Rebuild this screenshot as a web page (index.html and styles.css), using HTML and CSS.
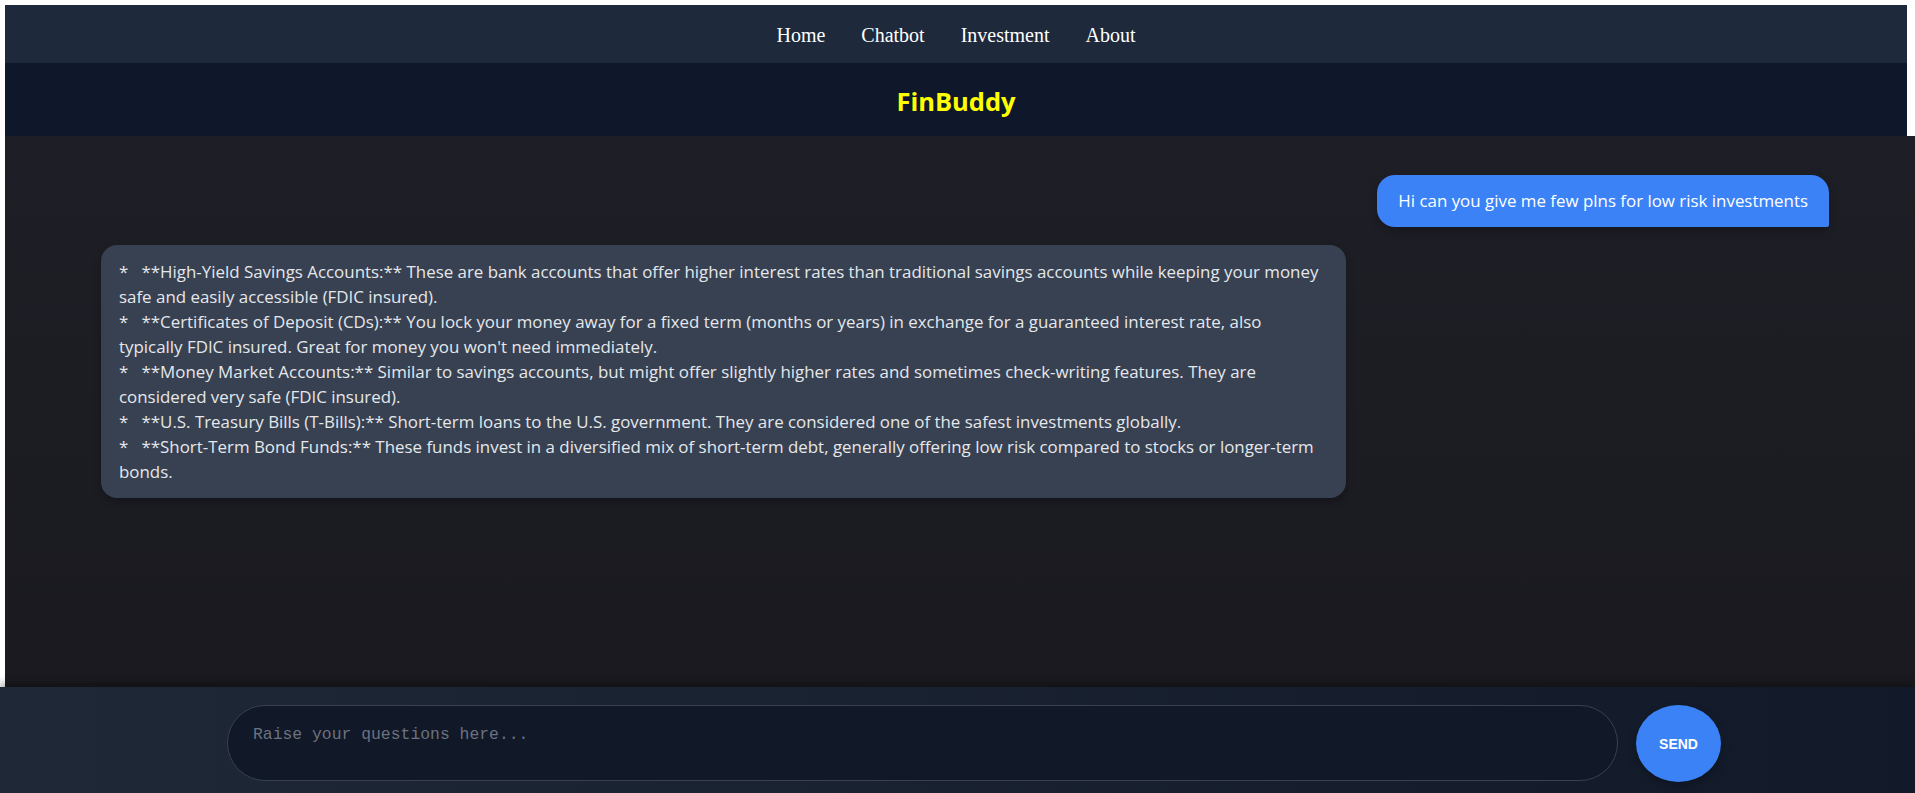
FILE: index.html
```html
<!DOCTYPE html>
<html lang="en">
<head>
<meta charset="utf-8">
<title>FinBuddy</title>
<link rel="stylesheet" href="styles.css">
</head>
<body>
<div class="app">
  <div class="top">
    <nav class="nav">
      <a class="nav-link" href="#">Home</a>
      <a class="nav-link" href="#">Chatbot</a>
      <a class="nav-link" href="#">Investment</a>
      <a class="nav-link" href="#">About</a>
    </nav>
    <header class="header">
      <h1 class="brand">FinBuddy</h1>
    </header>
  </div>
  <main class="chat">
    <div class="row row-user">
      <div class="bubble bubble-user">Hi can you give me few plns for low risk investments</div>
    </div>
    <div class="row row-bot">
      <div class="bubble bubble-bot">*   **High-Yield Savings Accounts:** These are bank accounts that offer higher interest rates than traditional savings accounts while keeping your money safe and easily accessible (FDIC insured).
*   **Certificates of Deposit (CDs):** You lock your money away for a fixed term (months or years) in exchange for a guaranteed interest rate, also typically FDIC insured. Great for money you won't need immediately.
*   **Money Market Accounts:** Similar to savings accounts, but might offer slightly higher rates and sometimes check-writing features. They are considered very safe (FDIC insured).
*   **U.S. Treasury Bills (T-Bills):** Short-term loans to the U.S. government. They are considered one of the safest investments globally.
*   **Short-Term Bond Funds:** These funds invest in a diversified mix of short-term debt, generally offering low risk compared to stocks or longer-term bonds.</div>
    </div>
  </main>
  <footer class="composer">
    <textarea class="input" placeholder="Raise your questions here..."></textarea>
    <button class="send" type="button">SEND</button>
  </footer>
</div>
</body>
</html>
```
FILE: styles.css
```css
* { box-sizing: border-box; }
html, body { margin: 0; padding: 0; }
body {
  background: #ffffff;
  height: 100vh;
  overflow: hidden;
}
.app {
  display: flex;
  flex-direction: column;
  height: 100vh;
  padding-top: 5px;
}
.top {
  margin: 0 8px 0 5px;
}
.nav {
  height: 58px;
  background: #1e293b;
  display: flex;
  justify-content: center;
  align-items: center;
  gap: 36px;
}
.nav-link {
  font-family: "Liberation Serif", "Times New Roman", serif;
  font-size: 20px;
  color: #ffffff;
  text-decoration: none;
  padding-top: 3px;
}
.header {
  height: 73px;
  background: #0f172a;
  display: flex;
  align-items: center;
  justify-content: center;
}
.brand {
  margin: 0;
  font-family: "Open Sans", "Noto Sans", sans-serif;
  font-weight: 700;
  font-size: 25.5px;
  color: #ffff00;
  padding-top: 3px;
}
.chat {
  flex: 1;
  margin-left: 5px;
  background: linear-gradient(#1e1e26, #1a1a20);
  padding: 39px 86px 0 96px;
  display: flex;
  flex-direction: column;
  gap: 18px;
  font-family: "Open Sans", "Noto Sans", sans-serif;
}
.row { display: flex; }
.row-user { justify-content: flex-end; }
.row-bot { justify-content: flex-start; }
.bubble {
  font-size: 16.9px;
  line-height: 25px;
  white-space: pre-wrap;
  box-shadow: 0 4px 8px rgba(0, 0, 0, 0.25);
}
.bubble-user {
  background: #3b82f6;
  color: #ffffff;
  padding: 13px 21px 14px 21px;
  border-radius: 18px 18px 2px 18px;
}
.bubble-bot {
  background: #374151;
  color: #e5e7eb;
  width: 1245px;
  padding: 14px 18px;
  border-radius: 16px;
}
.composer {
  height: 106px;
  flex-shrink: 0;
  background: linear-gradient(to right, #1f2837, #121a2a);
  box-shadow: 0 -4px 8px rgba(0, 0, 0, 0.35);
  display: flex;
  align-items: flex-start;
  padding: 18px 0 0 227px;
  gap: 18px;
  position: relative;
}
.input {
  width: 1391px;
  height: 76px;
  resize: none;
  background: #111827;
  border: 1px solid #374151;
  border-radius: 38px;
  padding: 19px 25px;
  font-family: "Liberation Mono", "DejaVu Sans Mono", monospace;
  font-size: 16.4px;
  color: #e5e7eb;
  outline: none;
}
.input::placeholder { color: #6b7280; }
.send {
  width: 85px;
  height: 77px;
  border: none;
  border-radius: 50%;
  background: #3b82f6;
  color: #ffffff;
  font-family: "Liberation Sans", Arial, sans-serif;
  font-weight: 700;
  font-size: 14px;
  box-shadow: 0 4px 10px rgba(0, 0, 0, 0.3);
}
```
